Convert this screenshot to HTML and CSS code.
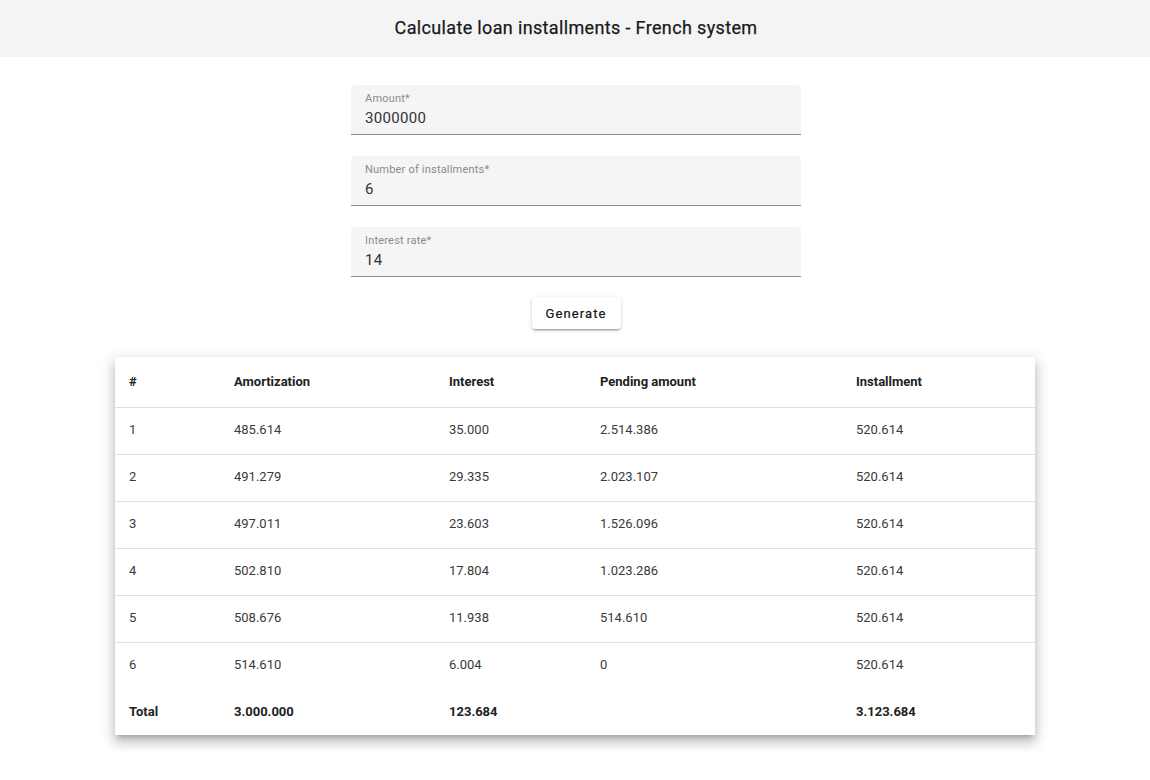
FILE: index.html
```html
<!DOCTYPE html>
<html lang="en">
<head>
<meta charset="utf-8">
<title>Calculate loan installments - French system</title>
<link rel="stylesheet" href="styles.css">
</head>
<body>
<header class="topbar">
  <h1 class="title">Calculate loan installments - French system</h1>
</header>
<main class="main">
  <form class="form">
    <div class="field">
      <label class="field-label">Amount*</label>
      <div class="field-value">3000000</div>
    </div>
    <div class="field">
      <label class="field-label">Number of installments*</label>
      <div class="field-value">6</div>
    </div>
    <div class="field">
      <label class="field-label">Interest rate*</label>
      <div class="field-value">14</div>
    </div>
    <button type="button" class="btn">Generate</button>
  </form>
  <div class="table-card">
    <table class="table">
      <colgroup>
        <col class="c1"><col class="c2"><col class="c3"><col class="c4"><col class="c5">
      </colgroup>
      <thead>
        <tr><th>#</th><th>Amortization</th><th>Interest</th><th>Pending amount</th><th>Installment</th></tr>
      </thead>
      <tbody>
        <tr><td>1</td><td>485.614</td><td>35.000</td><td>2.514.386</td><td>520.614</td></tr>
        <tr><td>2</td><td>491.279</td><td>29.335</td><td>2.023.107</td><td>520.614</td></tr>
        <tr><td>3</td><td>497.011</td><td>23.603</td><td>1.526.096</td><td>520.614</td></tr>
        <tr><td>4</td><td>502.810</td><td>17.804</td><td>1.023.286</td><td>520.614</td></tr>
        <tr><td>5</td><td>508.676</td><td>11.938</td><td>514.610</td><td>520.614</td></tr>
        <tr><td>6</td><td>514.610</td><td>6.004</td><td>0</td><td>520.614</td></tr>
      </tbody>
      <tfoot>
        <tr><td>Total</td><td>3.000.000</td><td>123.684</td><td></td><td>3.123.684</td></tr>
      </tfoot>
    </table>
  </div>
</main>
</body>
</html>
```
FILE: styles.css
```css
* { box-sizing: border-box; }
html, body {
  margin: 0;
  padding: 0;
  background: #ffffff;
  font-family: Roboto, "Noto Sans", Arial, sans-serif;
  color: rgba(0,0,0,0.87);
}
.topbar {
  height: 57px;
  background: #f4f4f4;
  display: flex;
  align-items: center;
  justify-content: center;
}
.title {
  margin: 0;
  font-size: 18px;
  font-weight: 400;
  color: #1a1a1a;
  letter-spacing: 0.35px;
  padding-bottom: 3px;
  padding-left: 2px;
  -webkit-text-stroke: 0.25px #1a1a1a;
}
.main {
  display: flex;
  flex-direction: column;
  align-items: center;
  padding-top: 28px;
}
.form {
  width: 450px;
  display: flex;
  flex-direction: column;
  align-items: center;
  gap: 21px;
  margin-left: 2px;
}
.field {
  width: 100%;
  height: 50px;
  background: #f5f5f5;
  border-radius: 4px 4px 0 0;
  border-bottom: 1px solid #8c8c8c;
  padding: 7px 14px 0;
  display: flex;
  flex-direction: column;
}
.field-label {
  font-size: 11px;
  line-height: 13px;
  color: #8a8a8a;
  letter-spacing: 0.2px;
}
.field-value {
  font-size: 15px;
  line-height: 20px;
  margin-top: 3px;
  color: #333;
  letter-spacing: 0.3px;
}
.btn {
  margin-top: -1px;
  width: 89px;
  height: 32px;
  border: none;
  border-radius: 4px;
  background: #fff;
  font-family: inherit;
  font-size: 13px;
  font-weight: 400;
  letter-spacing: 1.1px;
  color: #111;
  -webkit-text-stroke: 0.2px #111;
  box-shadow: 0 3px 1px -2px rgba(0,0,0,.2), 0 2px 2px 0 rgba(0,0,0,.14), 0 1px 5px 0 rgba(0,0,0,.12);
  cursor: pointer;
}
.table-card {
  margin-top: 28px;
  width: 920px;
  background: #fff;
  box-shadow: 0 5px 5px -3px rgba(0,0,0,.2), 0 8px 10px 1px rgba(0,0,0,.14), 0 3px 14px 2px rgba(0,0,0,.12);
  margin-bottom: 40px;
}
.table {
  width: 100%;
  border-collapse: collapse;
  table-layout: fixed;
}
.c1 { width: 105px; }
.c2 { width: 215px; }
.c3 { width: 151px; }
.c4 { width: 256px; }
.c5 { width: auto; }
.table th, .table td {
  text-align: left;
  padding: 0 0 0 14px;
  vertical-align: middle;
}
.table th {
  height: 50px;
  font-size: 13px;
  font-weight: 700;
  color: #212121;
  border-bottom: 1px solid #e0e0e0;
}
.table tbody td {
  height: 47px;
  font-size: 13px;
  color: #3a3a3a;
  border-bottom: 1px solid #e0e0e0;
  padding-bottom: 2px;
}
.table tbody tr:last-child td { border-bottom: none; }
.table tfoot td {
  height: 46px;
  font-size: 13px;
  font-weight: 700;
  color: #212121;
  padding-bottom: 1px;
}
```
